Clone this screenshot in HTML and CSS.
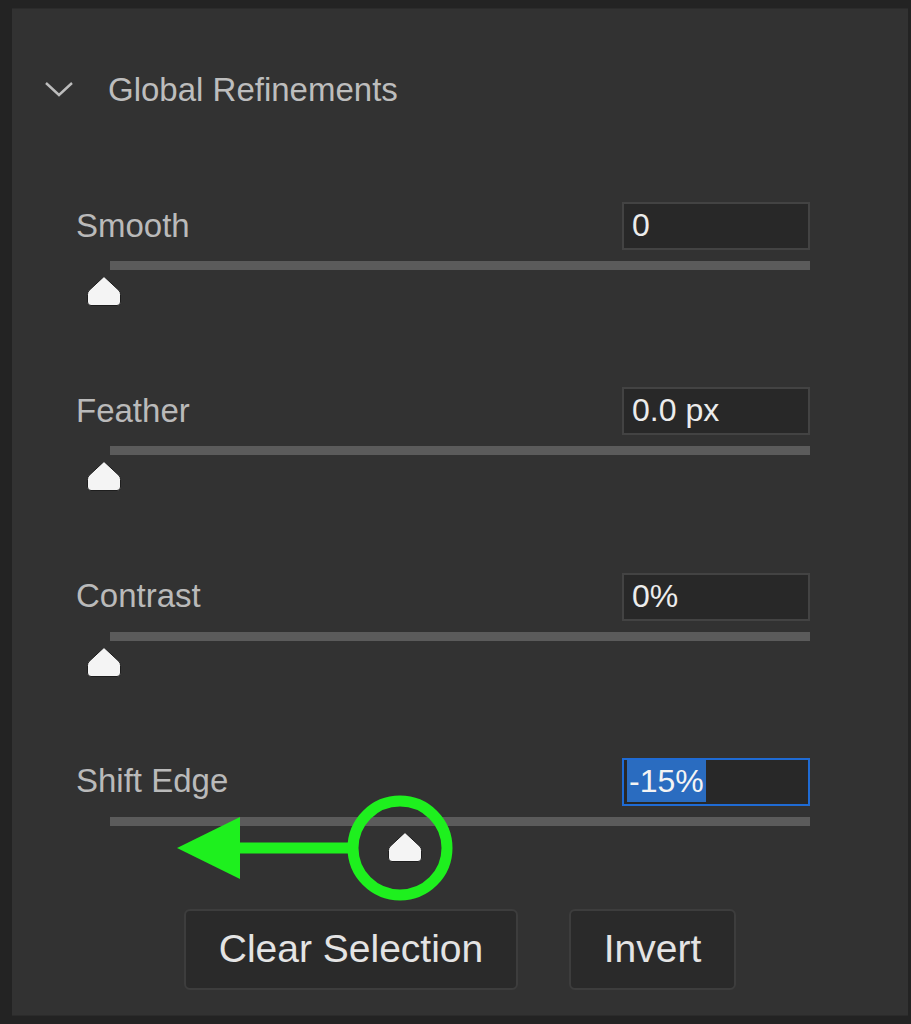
FILE: index.html
```html
<!doctype html>
<html lang="en">
<head>
    <meta charset="UTF-8">
    <title>Global Refinements</title>
    <link rel="stylesheet" href="styles.css">
</head>
<body>
<div class="panel">
    <div class="section-head">
        <svg class="chevron" width="30" height="16" viewBox="0 0 30 16">
            <path d="M2 2 L15 14 L28 2" fill="none" stroke="#bdbdbd" stroke-width="2.4"/>
        </svg>
        <span class="section-title">Global Refinements</span>
    </div>

    <div class="fields">
        <div class="field">
            <div class="field-top">
                <span class="label">Smooth</span>
                <div class="value-box">0</div>
            </div>
            <div class="slider">
                <div class="track"></div>
                <svg class="thumb" style="left:10px" width="36" height="32" viewBox="0 0 36 32">
                    <path d="M18 1.5 L33 15.5 Q34.5 17 34.5 19.5 L34.5 27 Q34.5 30.5 31 30.5 L5 30.5 Q1.5 30.5 1.5 27 L1.5 19.5 Q1.5 17 3 15.5 Z" fill="#f4f4f4" stroke="#1e1e1e" stroke-width="1"/>
                </svg>
            </div>
        </div>

        <div class="field">
            <div class="field-top">
                <span class="label">Feather</span>
                <div class="value-box">0.0 px</div>
            </div>
            <div class="slider">
                <div class="track"></div>
                <svg class="thumb" style="left:10px" width="36" height="32" viewBox="0 0 36 32">
                    <path d="M18 1.5 L33 15.5 Q34.5 17 34.5 19.5 L34.5 27 Q34.5 30.5 31 30.5 L5 30.5 Q1.5 30.5 1.5 27 L1.5 19.5 Q1.5 17 3 15.5 Z" fill="#f4f4f4" stroke="#1e1e1e" stroke-width="1"/>
                </svg>
            </div>
        </div>

        <div class="field">
            <div class="field-top">
                <span class="label">Contrast</span>
                <div class="value-box">0%</div>
            </div>
            <div class="slider">
                <div class="track"></div>
                <svg class="thumb" style="left:10px" width="36" height="32" viewBox="0 0 36 32">
                    <path d="M18 1.5 L33 15.5 Q34.5 17 34.5 19.5 L34.5 27 Q34.5 30.5 31 30.5 L5 30.5 Q1.5 30.5 1.5 27 L1.5 19.5 Q1.5 17 3 15.5 Z" fill="#f4f4f4" stroke="#1e1e1e" stroke-width="1"/>
                </svg>
            </div>
        </div>

        <div class="field">
            <div class="field-top">
                <span class="label">Shift Edge</span>
                <div class="value-box focused"><span class="selected">-15%</span></div>
            </div>
            <div class="slider">
                <div class="track"></div>
                <svg class="thumb" style="left:311px" width="36" height="32" viewBox="0 0 36 32">
                    <path d="M18 1.5 L33 15.5 Q34.5 17 34.5 19.5 L34.5 27 Q34.5 30.5 31 30.5 L5 30.5 Q1.5 30.5 1.5 27 L1.5 19.5 Q1.5 17 3 15.5 Z" fill="#f4f4f4" stroke="#1e1e1e" stroke-width="1"/>
                </svg>
                <svg class="annotation" width="300" height="120" viewBox="0 0 300 120">
                    <circle cx="230" cy="60" r="47" fill="none" stroke="#1ef01e" stroke-width="11"/>
                    <rect x="68" y="54.5" width="116" height="11" fill="#1ef01e"/>
                    <polygon points="7,60 70,29 70,91" fill="#1ef01e"/>
                </svg>
            </div>
        </div>
    </div>

    <div class="actions">
        <button class="btn btn-wide">Clear Selection</button>
        <button class="btn">Invert</button>
    </div>
</div>
</body>
</html>
```

FILE: styles.css
```css
html,body{
    margin:0px;
    padding:0px;
}
body{
    width:911px;
    height:1024px;
    background:#232323;
    font-family:"Liberation Sans", Arial, sans-serif;
    overflow:hidden;
}
.panel{
    margin:8px 3px 0 12px;
    height:1008px;
    box-sizing:border-box;
    background:#323232;
    border-top:1px solid #2b2b2b;
    border-bottom:1px solid #2b2b2b;
    padding-top:57px;
}
.section-head{
    display:flex;
    align-items:center;
    height:48px;
    padding-left:32px;
}
.chevron{
    display:block;
    margin-top:-2px;
}
.section-title{
    margin-left:34px;
    font-size:33px;
    color:#bdbdbd;
    margin-top:-1px;
}
.fields{
    display:flex;
    flex-direction:column;
    gap:81.3px;
    margin-top:88px;
    padding:0 98px 0 64px;
}
.field-top{
    display:flex;
    justify-content:space-between;
    align-items:center;
    height:48px;
}
.label{
    font-size:33px;
    color:#bababa;
    margin-top:-1px;
}
.value-box{
    width:188px;
    height:48px;
    box-sizing:border-box;
    background:#282828;
    border:2px solid #434343;
    color:#ececec;
    font-size:32px;
    line-height:42px;
    padding-left:8px;
}
.value-box.focused{
    border-color:#1f6bd4;
    padding-left:3px;
}
.selected{
    display:inline-block;
    background:#2a6cc0;
    color:#f4f4f4;
    height:42px;
    padding:0 2px;
}
.slider{
    position:relative;
    height:56px;
    box-sizing:border-box;
    padding-top:11px;
}
.track{
    margin-left:34px;
    height:9px;
    background:#5b5b5b;
}
.thumb{
    position:absolute;
    top:25px;
}
.annotation{
    position:absolute;
    left:94px;
    top:-18px;
}
.actions{
    display:flex;
    justify-content:center;
    gap:51px;
    margin-top:47px;
}
.btn{
    height:81px;
    width:167px;
    box-sizing:border-box;
    background:#2a2a2a;
    border:2px solid #3d3d3d;
    border-radius:6px;
    color:#e4e4e4;
    font-family:"Liberation Sans", Arial, sans-serif;
    font-size:39px;
    padding:0;
}
.btn-wide{
    width:334px;
}
```
